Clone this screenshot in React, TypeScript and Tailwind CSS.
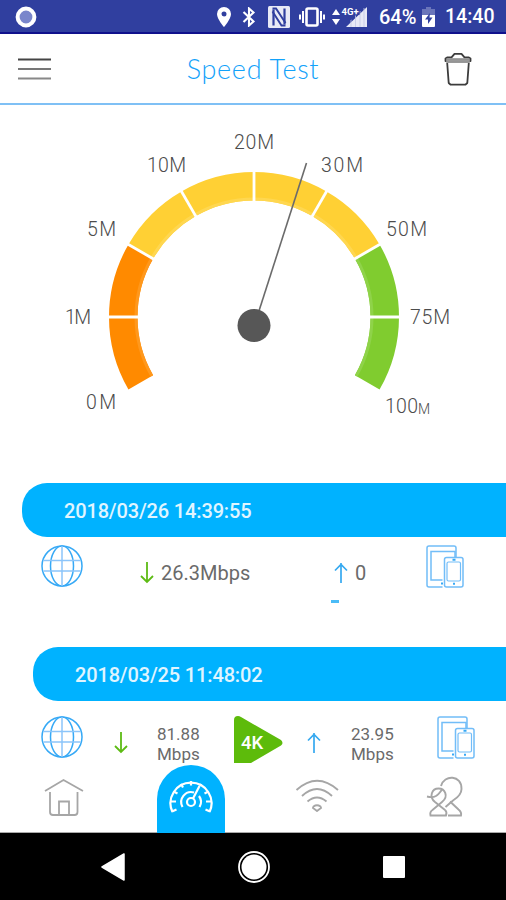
const CX = 254;
const CY = 212;
const OUTER = 145;
const INNER = 116.5;

const segments = [
  { from: -120, color: "#ff8a00", edge: "#ff981c" },
  { from: -90, color: "#ff8a00", edge: "#ff981c" },
  { from: -60, color: "#ffd034", edge: "#ffd750" },
  { from: -30, color: "#ffd034", edge: "#ffd750" },
  { from: 0, color: "#ffd034", edge: "#ffd750" },
  { from: 30, color: "#ffd034", edge: "#ffd750" },
  { from: 60, color: "#80cc2f", edge: "#8fd349" },
  { from: 90, color: "#80cc2f", edge: "#8fd349" },
];

const labels = [
  { text: "0M", x: 86, y: 304, w: 30 },
  { text: "1M", x: 65, y: 219, w: 26 },
  { text: "5M", x: 87, y: 131, w: 29 },
  { text: "10M", x: 147, y: 67, w: 39 },
  { text: "20M", x: 234, y: 44, w: 40 },
  { text: "30M", x: 321, y: 67, w: 42 },
  { text: "50M", x: 386, y: 131, w: 41 },
  { text: "75M", x: 410, y: 219, w: 40 },
];

const point = (deg: number, r: number) => {
  const rad = (deg * Math.PI) / 180;
  return `${(CX + r * Math.sin(rad)).toFixed(2)} ${(CY - r * Math.cos(rad)).toFixed(2)}`;
};

const ring = (from: number, inner: number, outer: number) =>
  `M${point(from, outer)}A${outer} ${outer} 0 0 1 ${point(from + 30, outer)}L${point(from + 30, inner)}A${inner} ${inner} 0 0 0 ${point(from, inner)}Z`;

function Gauge() {
  return (
    <svg viewBox="0 0 506 378" className="block h-[378px] w-[506px] shrink-0">
      {segments.map((s) => (
        <g key={s.from}>
          <path d={ring(s.from, INNER, OUTER)} fill={s.color} />
          <path d={ring(s.from, INNER, INNER + 3)} fill={s.edge} />
        </g>
      ))}
      {segments.slice(1).map((s) => (
        <path key={s.from} d={`M${point(s.from, INNER - 2)}L${point(s.from, OUTER + 2)}`} stroke="#fff" strokeWidth="2.8" />
      ))}
      <path d="M306.5 58L258 209" stroke="#6b6b6b" strokeWidth="1.6" />
      <circle cx={CX} cy="220.5" r="16.5" fill="#575757" />
      <g fill="#4c4c4c" fontFamily="Roboto, sans-serif" fontSize="19.5" fontWeight="300">
        {labels.map((l) => (
          <text key={l.text} x={l.x} y={l.y} textLength={l.w}>
            {l.text}
          </text>
        ))}
        <text x="385" y="308" textLength="33">100</text>
        <text x="418" y="309" fontSize="14">M</text>
      </g>
    </svg>
  );
}

function StatusBar() {
  return (
    <div className="flex h-[34px] shrink-0 items-center border-b-2 border-[#10108c] bg-[#303f9f] text-white">
      <svg viewBox="0 0 22 22" className="ml-[15px] mt-0.5 size-[22px]">
        <circle cx="11" cy="11" r="8.4" fill="#7986cb" stroke="#fff" strokeWidth="4" />
      </svg>
      <svg viewBox="0 0 14 20" className="ml-[180px] mt-0.5 h-5 w-3.5" fill="currentColor">
        <path fillRule="evenodd" d="M7 0a7 7 0 0 0-7 7c0 5 7 13 7 13s7-8 7-13a7 7 0 0 0-7-7Zm0 4.5a2.5 2.5 0 1 1 0 5 2.500 2.500 0 0 1 0-5Z" />
      </svg>
      <svg viewBox="0 0 14 20" className="ml-[11px] mt-0.5 h-5 w-3.5" fill="none" stroke="currentColor" strokeWidth="2.1">
        <path d="M1.5 5l10 9.500L7 18.500v-17l4.500 4L1.500 15" />
      </svg>
      <svg viewBox="0 0 22 22" className="ml-3 mt-0.5 size-[22px]">
        <rect width="22" height="22" rx="1.500" fill="#e8eaf6" />
        <path d="M5.500 19.500V3.500" stroke="#303f9f" strokeWidth="2.200" />
        <path d="M16.500 18.500V2.500" stroke="#303f9f" strokeWidth="2.200" />
        <path d="M4.500 2.500h3.500L17.500 17M4.500 5.500L13.500 19.500h4" fill="none" stroke="#303f9f" strokeWidth="1.900" />
      </svg>
      <svg viewBox="0 0 26 20" className="ml-[9px] mt-0.5 h-5 w-[26px]" fill="none" stroke="currentColor" strokeWidth="2">
        <rect x="7.5" y="1.5" width="11" height="17" rx="1.5" strokeWidth="2.6" />
        <path d="M4 4v12M22 4v12M1 7.500v5M25 7.500v5" />
      </svg>
      <svg viewBox="0 0 36 22" className="ml-[7px] mt-0.5 h-[22px] w-9" fill="currentColor">
        <path d="M4 3l4 6H0zM4 19l4-6H0z" />
        <path d="M14 21L35 1v20z" fill="#e8eaf6" />
        <path d="M19 10v11M23.500 8v13M28 5v16M32 2v19" stroke="#c3c8e6" strokeWidth=".8" />
        <path d="M9 0h18.500v9H24l-5 5H9z" fill="#303f9f" />
        <text x="9.500" y="8.500" fontFamily="Roboto, sans-serif" fontSize="9.5" fontWeight="700">4G+</text>
      </svg>
      <span className="ml-[11px] mt-0.5 w-[38px] whitespace-nowrap font-[Roboto,sans-serif] text-[20px] leading-none font-medium">64%</span>
      <svg viewBox="0 0 13 20" className="ml-[5px] mt-0.5 h-5 w-[13px]">
        <path d="M4 0h5v2h4v7H0V2h4z" fill="#6a75ba" />
        <path d="M0 8h13v11a1 1 0 0 1-1 1H1a1 1 0 0 1-1-1z" fill="#fff" />
        <path d="M8 6L3 12.500h3V17l4.500-6.500H7.500z" fill="#303f9f" />
      </svg>
      <span className="ml-[10px] mt-0.5 whitespace-nowrap font-[Roboto,sans-serif] text-[19.5px] leading-none font-medium">14:40</span>
    </div>
  );
}

function Header() {
  return (
    <header className="flex h-[71px] shrink-0 items-center justify-between border-b-2 border-[#7fc0f5] pr-[34px] pl-[18px]">
      <svg viewBox="0 0 33 24" className="h-6 w-[33px]" strokeWidth="2">
        <path d="M0 2.500h33" stroke="#444" />
        <path d="M0 12h33" stroke="#777" />
        <path d="M0 21.500h33" stroke="#888" />
      </svg>
      <h1 className="ml-[11px] whitespace-nowrap font-[Lato,sans-serif] text-[27px] leading-none font-light tracking-[0.7px] text-[#12a2fa]">
        Speed Test
      </h1>
      <svg viewBox="0 0 28 34" className="h-[34px] w-7" fill="none" stroke="#3c3c3c" strokeWidth="1.8" strokeLinejoin="round">
        <path d="M1.500 9V6.500l2-1.200h4l3-3.500h7l3 3.500h4l2 1.200V9z" fill="#fff" />
        <path d="M2.500 6.800h23v3.500h-23z" fill="#999" stroke="#888" strokeWidth="1" />
        <path d="M3.200 11l1.500 20 2 1.700h14.600l2-1.700 1.500-20" />
      </svg>
    </header>
  );
}

function Globe() {
  return (
    <svg viewBox="0 0 42 42" className="size-[42px]" fill="none" stroke="#36a9f6" strokeWidth="1.500">
      <circle cx="21" cy="21" r="20" />
      <ellipse cx="21" cy="21" rx="11.500" ry="20" />
      <path d="M21 1v40M2.500 15.500h37M2.500 26h37" stroke="#8cc5fa" />
    </svg>
  );
}

function Devices() {
  return (
    <svg viewBox="0 0 38 43" className="h-[43px] w-[38px]" fill="none" stroke="#72bdf8" strokeWidth="1.500">
      <path d="M16.500 42H3a2 2 0 0 1-2-2V3a2 2 0 0 1 2-2h25a2 2 0 0 1 2 2v9" />
      <path d="M16.500 35H5V6.500h24V12" />
      <rect x="18.500" y="12.500" width="18.500" height="29.500" rx="2" />
      <rect x="21" y="17" width="13.500" height="19" rx="1.500" strokeWidth="1.200" />
      <path d="M26.500 14.800h3M27 38.800h2M15 38.500h2" stroke="#36a9f6" strokeWidth="2" />
    </svg>
  );
}

function DownArrow() {
  return (
    <svg viewBox="0 0 14 22" className="h-[22px] w-3.5" fill="none" stroke="#5dbb14" strokeWidth="1.800">
      <path d="M7 0v20M1 14l6 6 6-6" />
    </svg>
  );
}

function UpArrow() {
  return (
    <svg viewBox="0 0 14 22" className="h-[22px] w-3.5" fill="none" stroke="#36a9f0" strokeWidth="1.700">
      <path d="M7 21V1M1 8.500l6-6 6 6" />
    </svg>
  );
}

function History() {
  return (
    <div className="h-[282px] shrink-0 overflow-hidden font-[Roboto,sans-serif] text-[#6a6a6a]">
      <div className="ml-[22px] flex h-[54px] items-center rounded-l-[25px] bg-[#00b2ff] pt-0.5 pl-[42px] text-[20px] font-medium tracking-[-0.15px] text-[#e0f5ff]">
        2018/03/26 14:39:55
      </div>
      <div className="flex h-[110px] items-start pl-[41px]">
        <div className="mt-2">
          <Globe />
        </div>
        <div className="mt-6 ml-[57px] flex h-6 w-[194px] items-center">
          <DownArrow />
          <span className="ml-[7px] text-[20px]">26.3Mbps</span>
        </div>
        <div className="mt-6 w-[92px]">
          <div className="flex h-6 items-center">
            <UpArrow />
            <span className="ml-[7px] text-[20px]">0</span>
          </div>
          <div className="-ml-[3px] mt-[15px] h-[3px] w-2 bg-[#4bbcf7]" />
        </div>
        <div className="mt-2">
          <Devices />
        </div>
      </div>

      <div className="ml-[33px] flex h-[54px] items-center rounded-l-[25px] bg-[#00b2ff] pt-0.5 pl-[42px] text-[20px] font-medium tracking-[-0.15px] text-[#e0f5ff]">
        2018/03/25 11:48:02
      </div>
      <div className="flex h-[64px] items-start pl-[41px] text-[17px] leading-5">
        <div className="mt-[15px]">
          <Globe />
        </div>
        <div className="mt-[31px] ml-[31px]">
          <DownArrow />
        </div>
        <div className="mt-[23px] ml-[29px] w-[77px]">
          81.88
          <br />
          Mbps
        </div>
        <svg viewBox="0 0 49 48" className="mt-[15px] h-12 w-[49px]">
          <path d="M4 0Q0 0 0 4v43h17l30-17.500q3-2.500 0-5.500L7 1Q5.500 0 4 0z" fill="#5dbb0b" />
          <text x="7" y="33" fill="#fff" fontFamily="Roboto, sans-serif" fontSize="18.5" fontWeight="500">4K</text>
        </svg>
        <div className="mt-[31px] ml-[24px]">
          <UpArrow />
        </div>
        <div className="mt-[23px] ml-[30px] w-[86px]">
          23.95
          <br />
          Mbps
        </div>
        <div className="mt-[15px]">
          <Devices />
        </div>
      </div>
    </div>
  );
}

function TabBar() {
  return (
    <nav className="flex h-[68px] shrink-0 items-start border-b border-[#aaa] bg-white">
      <svg viewBox="0 0 40 40" className="mt-[13px] ml-[44px] size-10" fill="none" stroke="#a6a6a6" strokeWidth="1.800">
        <path d="M1 13L19.500 2 39 13M6 14v20a3 3 0 0 0 3 3h21.500a3 3 0 0 0 3-3V14M15 37V23.500h10V37" />
      </svg>
      <div className="ml-[73px] flex h-[68px] w-[68px] justify-center rounded-t-[34px] bg-[#00b2ff]">
        <svg viewBox="0 0 44 35" className="mt-3.5 h-[35px] w-11" fill="none" stroke="#fff" strokeWidth="2.200">
          <path d="M3.500 33A20.500 20.500 0 1 1 40.500 33" />
          <path d="M3 32.500l4.500-2M41 32.500l-4.500-2M2 22.500h5M42 22.500h-5M4.500 12.500l4 2M39.500 12.500L35.500 14.500M12 5l2 3.500M22 2v4.500M32 5l-1 2" />
          <path d="M13.500 28a10 10 0 0 1 11.500-14.500M30.500 28a10 10 0 0 0-.5-11" />
          <circle cx="22" cy="23" r="4" />
          <path d="M24 19.500L30.500 7" strokeWidth="2.200" />
        </svg>
      </div>
      <svg viewBox="0 0 44 34" className="mt-[13px] ml-[70px] h-[34px] w-11" fill="none" stroke="#a6a6a6" strokeWidth="1.900">
        <path d="M1.500 12Q22-6.500 43 12M7 18Q22 4 37 18M12.500 23.500Q22 15.500 31.500 23.500" />
        <path d="M18.500 28.500q3.500-2.500 7 0l.5 1.500-4 3-4-3z" />
      </svg>
      <svg viewBox="0 0 38 42" className="mt-[11px] ml-[87px] h-[42px] w-[38px]" fill="none" stroke="#a6a6a6" strokeWidth="1.900">
        <path d="M15 10C18-2 36-1 35.500 13c0 6-4.500 9-8.500 11.500L19.500 31" />
        <path d="M19 34c2 1.500 1.500 4 1 5.500H4.500c-.5-2-.5-4 2-5.500l9.500-8c7-5.500 3-13.500-3.500-13.500S2.500 20.500 9 26z" />
        <path d="M1 20.500c8 2 11-1 15-7M24 25.500l8.500 8c2.500 2 3 4 2.500 6H22" />
      </svg>
    </nav>
  );
}

function SystemNav() {
  return (
    <div className="flex h-[67px] shrink-0 items-center bg-black">
      <svg viewBox="0 0 24 28" className="ml-[101px] h-7 w-6">
        <path d="M23 1v26L1 14z" fill="#fff" stroke="#fff" strokeWidth="1.5" strokeLinejoin="round" />
      </svg>
      <svg viewBox="0 0 34 34" className="ml-[112px] size-[34px]">
        <circle cx="17" cy="17" r="15" fill="none" stroke="#fff" strokeWidth="1.8" />
        <circle cx="17" cy="17" r="12.5" fill="#fff" />
      </svg>
      <div className="ml-[112px] size-[22px] rounded-[1px] bg-white" />
    </div>
  );
}

export default function App() {
  return (
    <div className="flex h-[900px] w-[506px] flex-col overflow-hidden bg-white">
      <StatusBar />
      <Header />
      <Gauge />
      <History />
      <TabBar />
      <SystemNav />
    </div>
  );
}
